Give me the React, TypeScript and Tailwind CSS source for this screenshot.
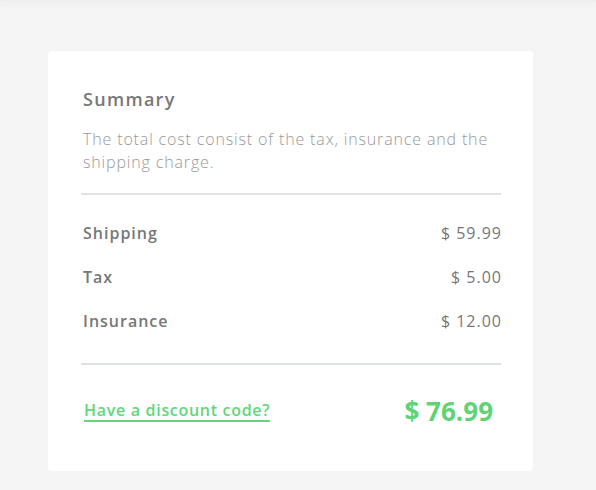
import React from 'react';

const rows = [
    { label: 'Shipping', amount: '$ 59.99' },
    { label: 'Tax', amount: '$ 5.00' },
    { label: 'Insurance', amount: '$ 12.00' },
];

export default function App() {
    return (
        <div className="min-h-[490px] bg-[#f5f5f5] font-['Open_Sans',sans-serif]">
            <div className="h-[2px] bg-[#eeeeee] shadow-[0_2px_6px_rgba(0,0,0,0.08)]" />
            <div className="ml-[48px] mt-[49px] w-[485px] h-[420px] rounded-[4px] bg-white pl-[33px] pr-[32px] pt-[36px]">
                <div className="px-[2px]">
                    <h2 className="text-[18px] leading-[24px] font-semibold tracking-[1.3px] text-[#787878]">Summary</h2>
                    <p className="mt-[17px] text-[16px] leading-[23px] font-light tracking-[0.85px] text-[#999999]">
                        The total cost consist of the tax, insurance and the shipping charge.
                    </p>
                </div>
                <div className="mt-[19px] h-[2px] bg-[#e2e2e2]" />
                <div className="pl-[2px] -mr-[1px] pt-[26px] pb-[30px] flex flex-col gap-[20px]">
                    {rows.map((row) => (
                        <div key={row.label} className="flex justify-between text-[16px] leading-[24px] tracking-[1px] text-[#777777]">
                            <span className="font-semibold">{row.label}</span>
                            <span className="font-medium">{row.amount}</span>
                        </div>
                    ))}
                </div>
                <div className="h-[2px] bg-[#dde2e2]" />
                <div className="flex items-center justify-between pl-[3px] pr-[8px] pt-[31px]">
                    <a href="#" className="text-[16px] leading-[20px] font-semibold tracking-[0.7px] text-[#62d67a] border-b-2 border-[#62d67a]">
                        Have a discount code?
                    </a>
                    <span className="text-[26px] leading-[30px] font-bold tracking-[0px] text-[#5fd377]">$ 76.99</span>
                </div>
            </div>
        </div>
    );
}
